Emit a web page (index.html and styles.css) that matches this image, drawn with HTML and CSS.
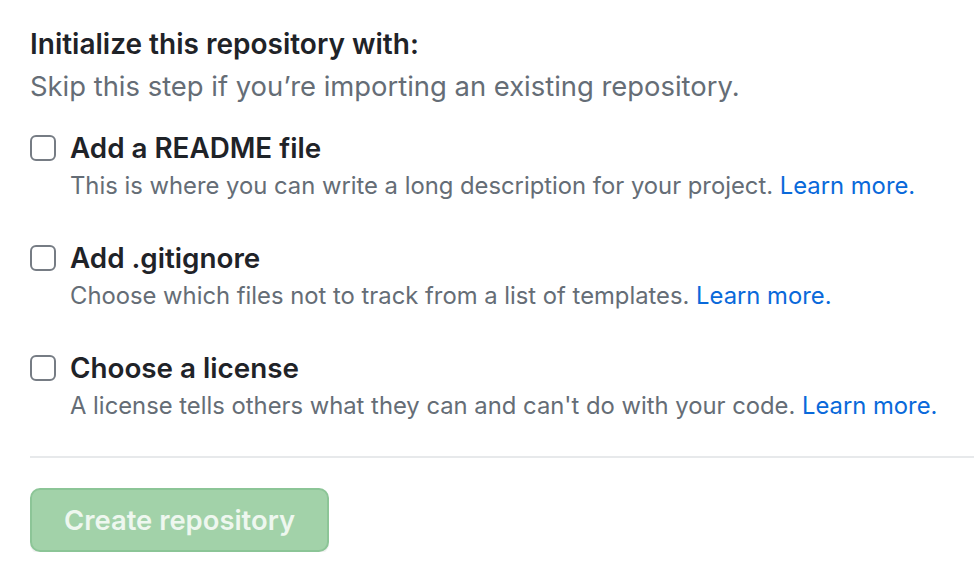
FILE: index.html
```html
<!DOCTYPE html>
<html>
<head>
<meta charset="utf-8">
<link rel="stylesheet" href="styles.css">
</head>
<body>
<div class="page">
  <h3 class="title">Initialize this repository with:</h3>
  <p class="note">Skip this step if you’re importing an existing repository.</p>
  <div class="option">
    <span class="box"></span>
    <div class="text">
      <div class="label">Add a README file</div>
      <div class="desc">This is where you can write a long description for your project. <a href="#">Learn more.</a></div>
    </div>
  </div>
  <div class="option">
    <span class="box"></span>
    <div class="text">
      <div class="label">Add .gitignore</div>
      <div class="desc">Choose which files not to track from a list of templates. <a href="#">Learn more.</a></div>
    </div>
  </div>
  <div class="option">
    <span class="box"></span>
    <div class="text">
      <div class="label">Choose a license</div>
      <div class="desc">A license tells others what they can and can't do with your code. <a href="#">Learn more.</a></div>
    </div>
  </div>
  <hr class="rule">
  <button class="create">Create repository</button>
</div>
</body>
</html>
```
FILE: styles.css
```css
html, body { margin: 0; padding: 0; background: #fff; }
body { font-family: Inter, "Noto Sans", sans-serif; color: #1f2328; }
.page { padding: 26px 0 0 30px; }
.title { margin: 0; font-size: 28px; font-weight: 600; line-height: 36px; }
.note { margin: 6px 0 0; font-size: 27.4px; line-height: 36px; color: #656d76; }
.option { display: flex; gap: 14px; margin-top: 26px; }
.option + .option { margin-top: 36px; }
.box { flex: none; box-sizing: border-box; width: 26px; height: 26px; border: 2px solid #767c84; border-radius: 6px; margin-top: 5px; }
.label { font-size: 27.8px; font-weight: 600; line-height: 36px; }
.desc { margin-top: 2px; font-size: 23.8px; line-height: 36px; color: #656d76; }
.desc a { color: #0969da; text-decoration: none; }
.rule { border: 0; border-top: 2px solid #e7e9eb; margin: 32px 0 0; }
.create { display: block; margin-top: 30px; height: 64px; padding: 0 32px; border: 2px solid #8cc597; border-radius: 10px; background: #a2d2a9; color: #eef7ef; font-family: Inter, sans-serif; font-size: 27.4px; font-weight: 600; box-shadow: 0 2px 0 rgba(31,35,40,0.06); }
```
